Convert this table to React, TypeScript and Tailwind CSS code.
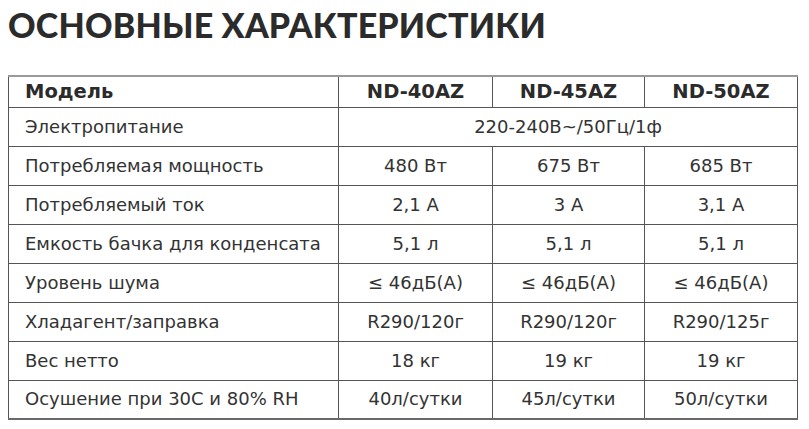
const rows: [string, string[]][] = [
  ["Электропитание", ["220-240В~/50Гц/1ф"]],
  ["Потребляемая мощность", ["480 Вт", "675 Вт", "685 Вт"]],
  ["Потребляемый ток", ["2,1 А", "3 А", "3,1 А"]],
  ["Емкость бачка для конденсата", ["5,1 л", "5,1 л", "5,1 л"]],
  ["Уровень шума", ["≤ 46дБ(А)", "≤ 46дБ(А)", "≤ 46дБ(А)"]],
  ["Хладагент/заправка", ["R290/120г", "R290/120г", "R290/125г"]],
  ["Вес нетто", ["18 кг", "19 кг", "19 кг"]],
  ["Осушение при 30С и 80% RH", ["40л/сутки", "45л/сутки", "50л/сутки"]],
]

export default function App() {
  return (
    <div className="w-[809px] h-[429px] bg-white text-[#2b2b2b] font-['DejaVu_Sans',sans-serif] overflow-hidden">
      <h1 className="pl-[8px] pt-[3px] text-[34px] leading-[44px] font-black font-['Lato',sans-serif] tracking-[0.2px]">
        ОСНОВНЫЕ ХАРАКТЕРИСТИКИ
      </h1>
      <table className="ml-[8px] mt-[28px] w-[789px] border-collapse table-fixed text-[18px] text-[#333]">
        <colgroup>
          <col className="w-[330px]" />
          <col className="w-[154px]" />
          <col className="w-[152px]" />
          <col className="w-[153px]" />
        </colgroup>
        <thead className="text-[#2b2b2b]">
          <tr className="h-[31px]">
            <th className="border border-[#555] border-t-[#9a9a9a] border-t-2 text-left pl-[16px] font-bold text-[19.5px] leading-none">Модель</th>
            <th className="border border-[#555] border-t-[#9a9a9a] border-t-2 font-bold text-[19.5px] leading-none">ND-40AZ</th>
            <th className="border border-[#555] border-t-[#9a9a9a] border-t-2 font-bold text-[19.5px] leading-none">ND-45AZ</th>
            <th className="border border-[#555] border-t-[#9a9a9a] border-t-2 font-bold text-[19.5px] leading-none">ND-50AZ</th>
          </tr>
        </thead>
        <tbody>
          {rows.map(([label, vals], i) => (
            <tr key={i} className="h-[39px]">
              <td className={`border border-[#555] pl-[16px] leading-none ${i === rows.length - 1 ? "border-b-2 border-b-[#6a6a6a]" : ""}`}>{label}</td>
              {vals.length === 1 ? (
                <td colSpan={3} className="border border-[#555] text-center leading-none">{vals[0]}</td>
              ) : (
                vals.map((v, j) => (
                  <td key={j} className={`border border-[#555] text-center leading-none ${i === rows.length - 1 ? "border-b-2 border-b-[#6a6a6a]" : ""}`}>{v}</td>
                ))
              )}
            </tr>
          ))}
        </tbody>
      </table>
    </div>
  )
}
